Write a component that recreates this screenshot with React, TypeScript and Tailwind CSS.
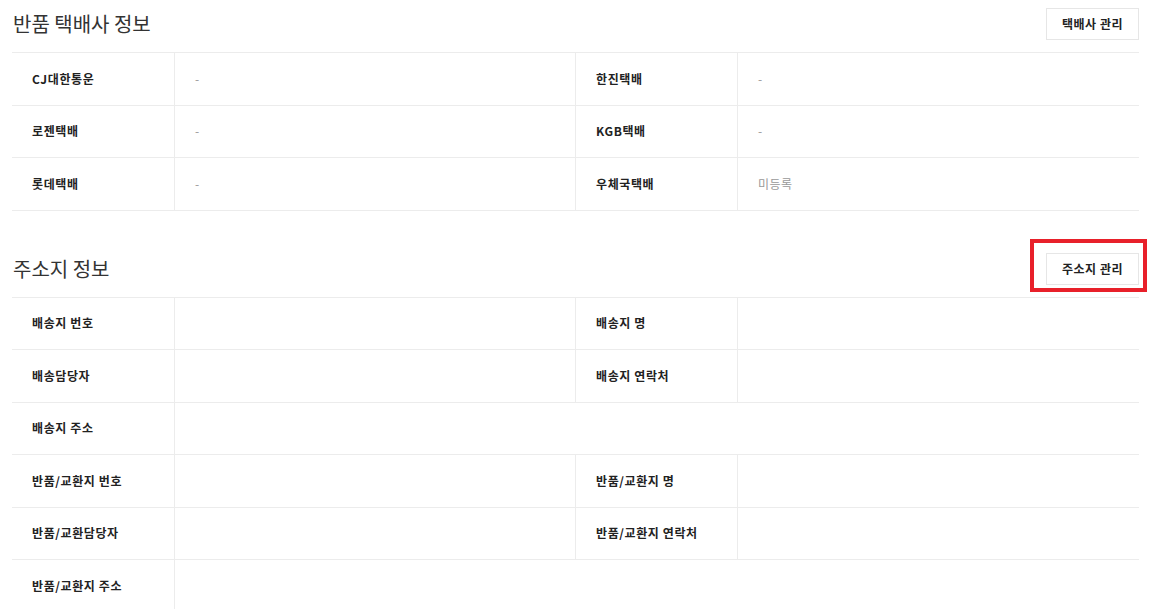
const carriers: [string, string, string, string][] = [
  ["CJ대한통운", "-", "한진택배", "-"],
  ["로젠택배", "-", "KGB택배", "-"],
  ["롯데택배", "-", "우체국택배", "미등록"],
];

type Row = { label: string; value?: string; label2?: string; value2?: string; full?: boolean };

const addressRows: Row[] = [
  { label: "배송지 번호", label2: "배송지 명" },
  { label: "배송담당자", label2: "배송지 연락처" },
  { label: "배송지 주소", full: true },
  { label: "반품/교환지 번호", label2: "반품/교환지 명" },
  { label: "반품/교환담당자", label2: "반품/교환지 연락처" },
  { label: "반품/교환지 주소", full: true },
];

function Header({ title, action, marked }: { title: string; action: string; marked?: boolean }) {
  return (
    <div className="flex h-[52px] items-start justify-between pt-2">
      <h2 className="pl-px text-[20px] leading-8 text-[#333]">{title}</h2>
      <div className="relative">
        <button className="h-8 w-[93px] border border-[#e6e6e6] bg-white text-[12px] font-bold tracking-[0.5px] text-[#222]">
          {action}
        </button>
        {marked && (
          <div className="pointer-events-none absolute -top-[14px] -right-[8px] -bottom-[7px] -left-[16px] border-4 border-[#e8202a]" />
        )}
      </div>
    </div>
  );
}

function InfoRow({ label, value, label2, value2, full }: Row) {
  return (
    <div className="grid h-[52.5px] grid-cols-[163px_1fr_162px_1fr] border-b border-[#ececec] text-[12px]">
      <div className="flex items-center border-r border-[#ececec] pl-5 font-bold tracking-[0.6px] text-[#222]">
        {label}
      </div>
      {full ? (
        <div className="col-span-3 flex items-center pl-5 text-[#999]">{value}</div>
      ) : (
        <>
          <div className="flex items-center border-r border-[#ececec] pl-5 text-[#999]">{value}</div>
          <div className="flex items-center border-r border-[#ececec] pl-5 font-bold tracking-[0.6px] text-[#222]">
            {label2}
          </div>
          <div className="flex items-center pl-5 tracking-[0.5px] text-[#999]">{value2}</div>
        </>
      )}
    </div>
  );
}

export default function App() {
  return (
    <div
      className="min-h-screen bg-white pr-[15px] pl-3"
      style={{ fontFamily: '"Noto Sans CJK KR", "Noto Sans", sans-serif' }}
    >
      <section>
        <Header title="반품 택배사 정보" action="택배사 관리" />
        <div className="border-t border-[#ececec]">
          {carriers.map(([a, b, c, d]) => (
            <InfoRow key={a} label={a} value={b} label2={c} value2={d} />
          ))}
        </div>
      </section>

      <section className="mt-[34px]">
        <Header title="주소지 정보" action="주소지 관리" marked />
        <div className="border-t border-[#ececec]">
          {addressRows.map((row) => (
            <InfoRow key={row.label} {...row} />
          ))}
        </div>
      </section>
    </div>
  );
}
